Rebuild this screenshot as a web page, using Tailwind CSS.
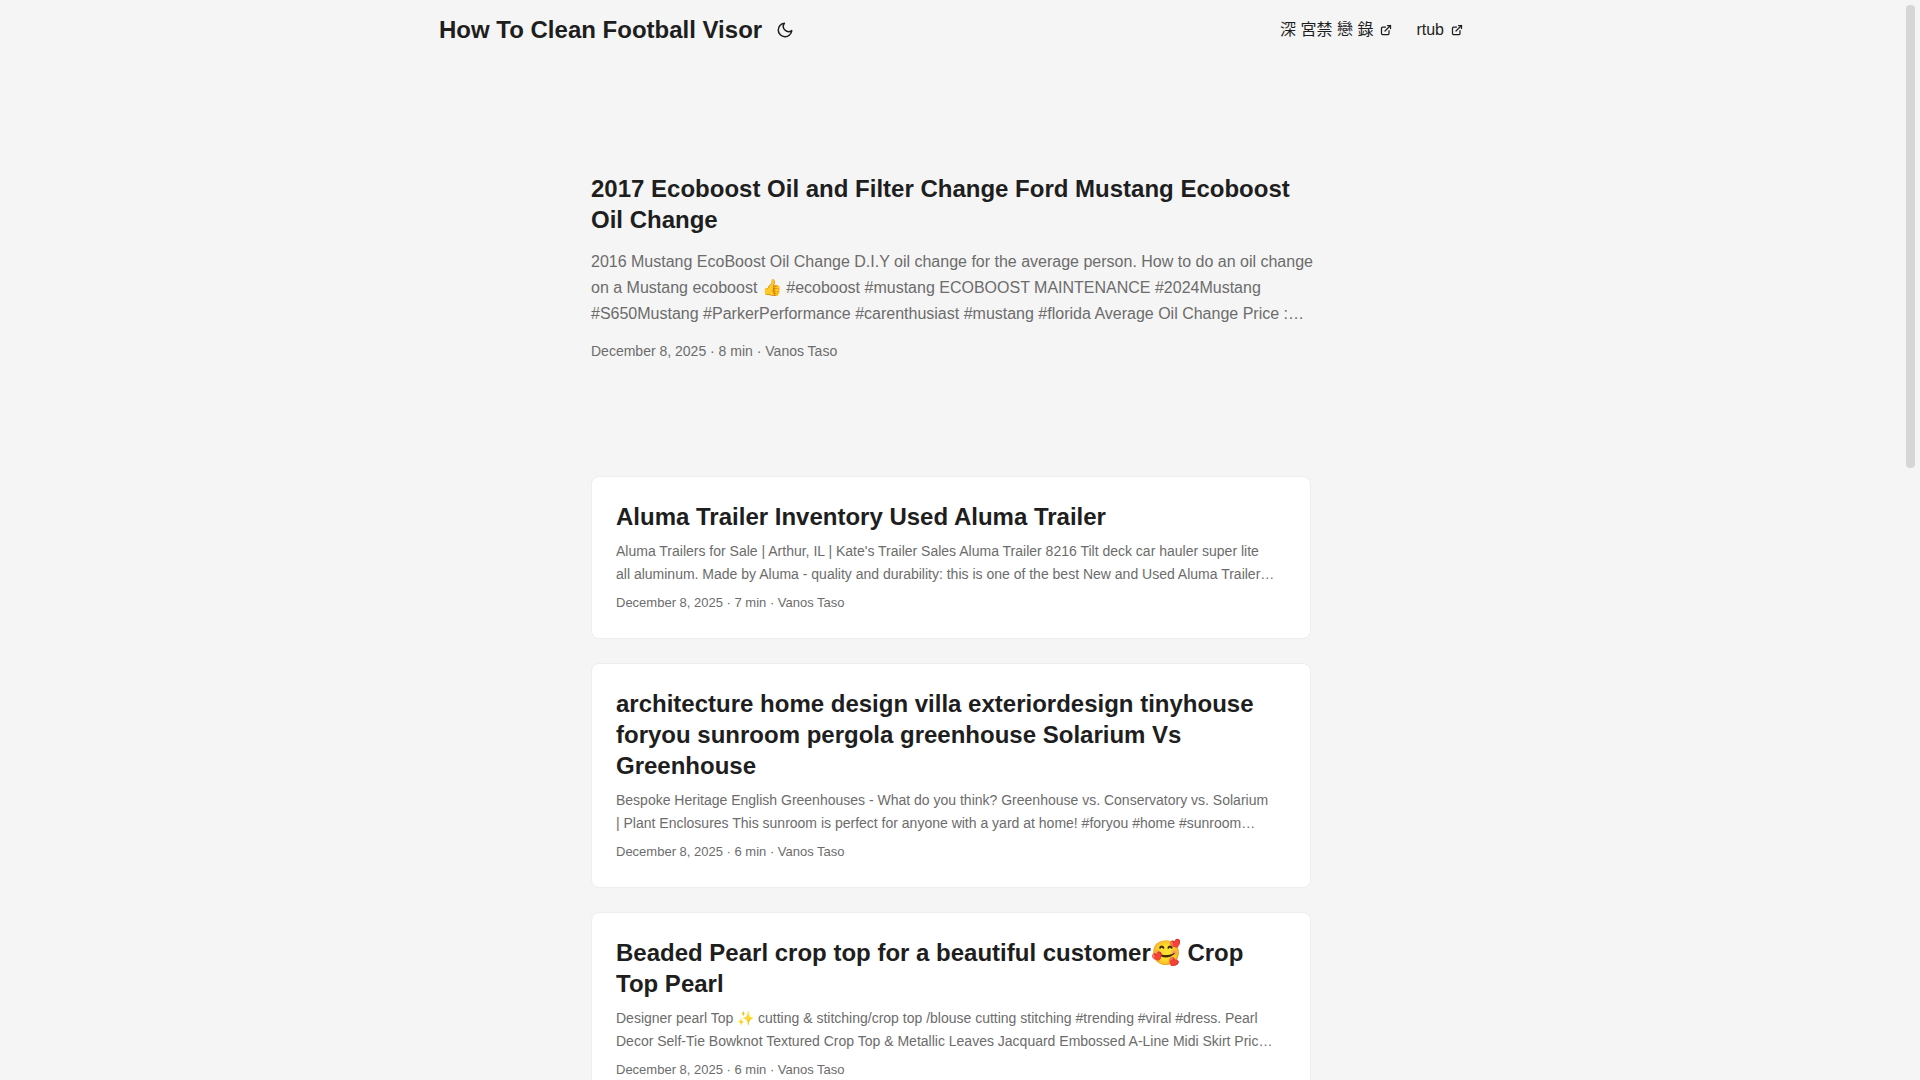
<!DOCTYPE html>
<html lang="en">
<head>
<meta charset="utf-8">
<meta name="viewport" content="width=device-width, initial-scale=1">
<title>How To Clean Football Visor</title>
<script src="https://cdn.jsdelivr.net/npm/@tailwindcss/browser@4"></script>
</head>
<body class="h-screen overflow-hidden bg-[#f5f5f5] pr-[18px] font-['Liberation_Sans','Noto_Sans_CJK_JP',sans-serif] text-base text-[#1e1e1e]">
<header class="mx-auto flex h-[60px] max-w-[1072px] items-center justify-between px-6">
  <div class="flex items-center">
    <a href="#" class="text-2xl font-bold">How To Clean Football Visor</a>
    <button type="button" aria-label="Toggle theme" class="ml-3.5">
      <svg class="size-[18px]" viewBox="0 0 24 24" fill="none" stroke="currentColor" stroke-width="2" stroke-linecap="round" stroke-linejoin="round"><path d="M21 12.79A9 9 0 1 1 11.21 3 7 7 0 0 0 21 12.79z"/></svg>
    </button>
  </div>
  <nav>
    <ul class="flex gap-6">
      <li><a href="#" class="flex items-center gap-[7px]">深 宮禁 戀 錄
        <svg class="size-3" viewBox="0 0 24 24" fill="none" stroke="currentColor" stroke-width="2.5" stroke-linecap="round" stroke-linejoin="round" shape-rendering="geometricPrecision"><path d="M18 13v6a2 2 0 01-2 2H5a2 2 0 01-2-2V8a2 2 0 012-2h6"/><path d="M15 3h6v6"/><path d="M10 14L21 3"/></svg></a></li>
      <li><a href="#" class="flex items-center gap-[7px]">rtub
        <svg class="size-3" viewBox="0 0 24 24" fill="none" stroke="currentColor" stroke-width="2.5" stroke-linecap="round" stroke-linejoin="round" shape-rendering="geometricPrecision"><path d="M18 13v6a2 2 0 01-2 2H5a2 2 0 01-2-2V8a2 2 0 012-2h6"/><path d="M15 3h6v6"/><path d="M10 14L21 3"/></svg></a></li>
    </ul>
  </nav>
</header>
<main class="mx-auto max-w-[768px] p-6">
  <article class="mt-6 mb-12 flex min-h-80 flex-col justify-center">
    <h1 class="text-2xl leading-[31px] font-bold"><a href="#">2017 Ecoboost Oil and Filter Change Ford Mustang Ecoboost Oil Change</a></h1>
    <p class="mt-3.5 mb-3 leading-[26px] text-[#6c6c6c] md:whitespace-nowrap">2016 Mustang EcoBoost Oil Change D.I.Y oil change for the average person. How to do an oil change<br class="max-md:hidden"> on a Mustang ecoboost 👍 #ecoboost #mustang ECOBOOST MAINTENANCE #2024Mustang<br class="max-md:hidden"> #S650Mustang #ParkerPerformance #carenthusiast #mustang #florida Average Oil Change Price :…</p>
    <footer class="text-sm leading-6 text-[#6c6c6c]">December 8, 2025 · 8 min · Vanos Taso</footer>
  </article>
  <article class="mb-6 rounded-lg border border-[#eeeeee] bg-white p-6">
    <h2 class="text-2xl leading-[31px] font-bold"><a href="#">Aluma Trailer Inventory Used Aluma Trailer</a></h2>
    <p class="mt-2 mb-1.5 text-sm leading-[23px] text-[#6c6c6c] md:whitespace-nowrap">Aluma Trailers for Sale | Arthur, IL | Kate's Trailer Sales Aluma Trailer 8216 Tilt deck car hauler super lite<br class="max-md:hidden"> all aluminum. Made by Aluma - quality and durability: this is one of the best New and Used Aluma Trailer…</p>
    <footer class="text-[13px] leading-[22px] text-[#6c6c6c]">December 8, 2025 · 7 min · Vanos Taso</footer>
  </article>
  <article class="mb-6 rounded-lg border border-[#eeeeee] bg-white p-6">
    <h2 class="text-2xl leading-[31px] font-bold"><a href="#">architecture home design villa exteriordesign tinyhouse foryou sunroom pergola greenhouse Solarium Vs Greenhouse</a></h2>
    <p class="mt-2 mb-1.5 text-sm leading-[23px] text-[#6c6c6c] md:whitespace-nowrap">Bespoke Heritage English Greenhouses - What do you think? Greenhouse vs. Conservatory vs. Solarium<br class="max-md:hidden"> | Plant Enclosures This sunroom is perfect for anyone with a yard at home! #foryou #home #sunroom…</p>
    <footer class="text-[13px] leading-[22px] text-[#6c6c6c]">December 8, 2025 · 6 min · Vanos Taso</footer>
  </article>
  <article class="mb-6 rounded-lg border border-[#eeeeee] bg-white p-6">
    <h2 class="text-2xl leading-[31px] font-bold"><a href="#">Beaded Pearl crop top for a beautiful customer🥰 Crop Top Pearl</a></h2>
    <p class="mt-2 mb-1.5 text-sm leading-[23px] text-[#6c6c6c] md:whitespace-nowrap">Designer pearl Top ✨ cutting &amp; stitching/crop top /blouse cutting stitching #trending #viral #dress. Pearl<br class="max-md:hidden"> Decor Self-Tie Bowknot Textured Crop Top &amp; Metallic Leaves Jacquard Embossed A-Line Midi Skirt Pric…</p>
    <footer class="text-[13px] leading-[22px] text-[#6c6c6c]">December 8, 2025 · 6 min · Vanos Taso</footer>
  </article>
</main>
<div aria-hidden="true" class="fixed top-[5px] right-[5px] h-[463px] w-[9px] rounded-sm bg-[#d6d6d6]"></div>
</body>
</html>
